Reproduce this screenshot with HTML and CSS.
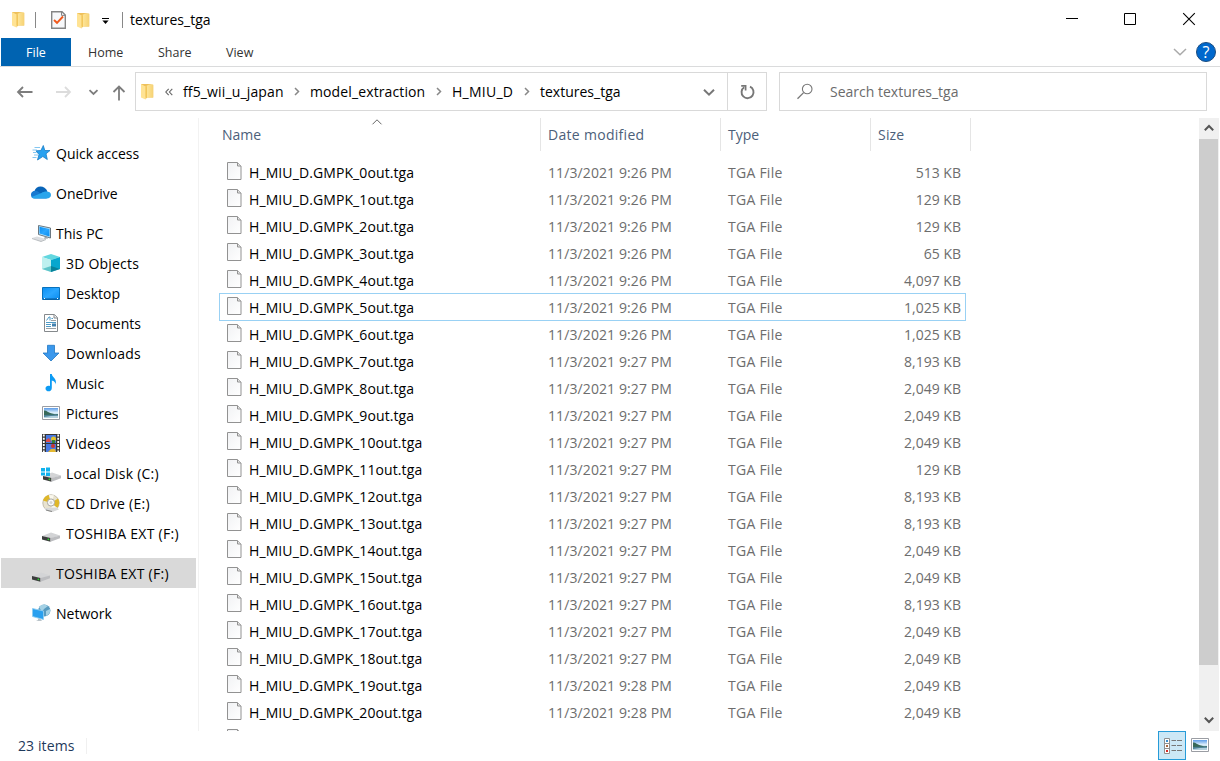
FILE: index.html
```html
<!DOCTYPE html>
<html lang="en">
<head>
<meta charset="utf-8">
<title>textures_tga</title>
<link rel="stylesheet" href="styles.css">
</head>
<body>
<svg class="defs" width="0" height="0">
  <defs>
    <linearGradient id="gold" x1="0" x2="1"><stop offset="0" stop-color="#ffe9a0"/><stop offset="1" stop-color="#f6d274"/></linearGradient>
    <linearGradient id="blue" x1="0" y1="0" x2="1" y2="1"><stop offset="0" stop-color="#0b8ff2"/><stop offset=".5" stop-color="#2ba7ff"/><stop offset="1" stop-color="#0a8cee"/></linearGradient>
    <linearGradient id="sky" x1="0" y1="0" x2="0" y2="1"><stop offset="0" stop-color="#5b9be8"/><stop offset=".45" stop-color="#d9ecfa"/><stop offset="1" stop-color="#9bc8df"/></linearGradient>
    <linearGradient id="paper" x1="0" y1="0" x2="1" y2="1"><stop offset="0" stop-color="#f1f2f4"/><stop offset="1" stop-color="#ffffff"/></linearGradient>
  </defs>
  <symbol id="folder" viewBox="0 0 13 17"><path d="M0 1H8.500L12.200 2V14.500H5L0 13.500Z" fill="#eec05a"/><path d="M4.500 3.500 8 1.500H12.200V14.500H4.500Z" fill="url(#gold)"/><path d="M0 1 4.500 3.500V16.600L0 14.500Z" fill="#ffe394"/><path d="M4.500 3.500V16.600L6 14.500V3Z" fill="#f2c65b"/></symbol>
  <symbol id="file" viewBox="0 0 15 18"><path d="M.5 .5H10.500L14 4V17.500H.5Z" fill="url(#paper)" stroke="#929292"/><path d="M10.500 .8V4H14" fill="#e5e5e5" stroke="#929292"/></symbol>
  <symbol id="drive" viewBox="0 0 18 10"><path d="M0 4 9 .5 18 3.600 8.500 6.500Z" fill="#d3d4d6"/><path d="M0 4 8.500 6V9.700L0 7.400Z" fill="#3c3d3d"/><path d="M8.500 6 18 3.400V6.300L8.500 9.700Z" fill="#bcbdc0"/><circle cx="6.400" cy="7.300" r=".9" fill="#26d52d"/></symbol>
  <symbol id="picture" viewBox="0 0 18 14"><path d="M.5 .5H17.500V13.500H.5Z" fill="#fff" stroke="#9a9da3"/><path d="M2 2H16V12H2Z" fill="url(#sky)"/><path d="M2 4.500C4.500 4 6 6.500 9 7.300L13 8.300 16 8V9L2 9.500Z" fill="#376959"/><path d="M2 9 16 8.600V12H2Z" fill="#4b8196"/><path d="M2 11 9 10 16 9.800V12H2Z" fill="#b3d0dd"/></symbol>
</svg>

<header class="titlebar">
  <svg class="t-folder" width="13" height="17"><use href="#folder"/></svg>
  <i class="rule first"></i>
  <svg class="t-check" width="15" height="18" viewBox="0 0 15 18"><path d="M.7 .7H11L14.300 4V17.300H.7Z" fill="#f7f8fa" stroke="#858585" stroke-width="1.400"/><path d="M10.500 1V4.400H14" fill="none" stroke="#858585"/><path d="M3 9 6 11.800 12 5.500" fill="none" stroke="#f0591c" stroke-width="1.900"/></svg>
  <svg class="t-folder2" width="13" height="17"><use href="#folder"/></svg>
  <svg class="t-menu" width="7" height="6" viewBox="0 0 7 6"><path d="M0 .5H7" stroke="#000"/><path d="M.4 2.600H6.600L3.500 5.900Z"/></svg>
  <i class="rule second"></i>
  <span class="title">textures_tga</span>
  <div class="controls">
    <svg width="12" height="12" viewBox="0 0 12 12"><path d="M1 5.500H13" stroke="#000"/></svg>
    <svg width="12" height="12" viewBox="0 0 12 12"><path d="M.5 .5H11.500V11.500H.5Z" fill="none" stroke="#000"/></svg>
    <svg width="12" height="12" viewBox="0 0 12 12"><path d="M.2 .2 11.800 11.800M11.800 .2 .2 11.800" stroke="#000" stroke-width="1.100"/></svg>
  </div>
</header>

<nav class="tabs">
  <span class="file-tab">File</span>
  <span class="tab home">Home</span>
  <span class="tab share">Share</span>
  <span class="tab view">View</span>
  <div class="tab-tools">
    <svg width="14" height="8" viewBox="0 0 14 8"><path d="M1 1 7 6.800 13 1" fill="none" stroke="#aaa" stroke-width="1.500"/></svg>
    <span class="help">?</span>
  </div>
</nav>

<section class="navrow">
  <div class="arrows">
    <svg width="120" height="20" viewBox="0 0 120 20" fill="none" stroke="#7d7d7d" stroke-width="1.800">
      <path d="M8 5 3 10 8 15M3 10H17.500"/>
      <path d="M50 5 55 10 50 15M55 10H41" stroke="#dcdcdc"/>
      <path d="M74.500 8.200 78.500 12 82.500 8.200"/>
      <path d="M98.500 10 104 4.500 109.500 10M104 4.500V18.500"/>
    </svg>
  </div>
  <div class="address">
    <svg class="a-folder" width="13" height="17"><use href="#folder"/></svg>
    <svg class="a-more" width="8" height="8" viewBox="0 0 8 8"><path d="M3.700 .8 .8 4 3.700 7.200M7.300 .8 4.400 4 7.300 7.200" fill="none" stroke="#666" stroke-width="1.100"/></svg>
    <span class="crumb c1">ff5_wii_u_japan</span>
    <svg class="sep" width="6" height="10" viewBox="0 0 6 10"><path d="M1 1 4.500 4.500 1 8"/></svg>
    <span class="crumb c2">model_extraction</span>
    <svg class="sep" width="6" height="10" viewBox="0 0 6 10"><path d="M1 1 4.500 4.500 1 8"/></svg>
    <span class="crumb c3">H_MIU_D</span>
    <svg class="sep" width="6" height="10" viewBox="0 0 6 10"><path d="M1 1 4.500 4.500 1 8"/></svg>
    <span class="crumb c4">textures_tga</span>
    <svg class="a-drop" width="12" height="8" viewBox="0 0 12 8"><path d="M1 1.800 6 6.700 11 1.800" fill="none" stroke="#777" stroke-width="2"/></svg>
    <div class="refresh"><svg width="16" height="16" viewBox="0 0 16 16"><path d="M11 2.700A6 6 0 1 1 5.200 3.200" fill="none" stroke="#777" stroke-width="1.900"/><path d="M2.200 1.900H6.600V6.500" fill="none" stroke="#777" stroke-width="1.700"/></svg></div>
  </div>
  <div class="search">
    <svg width="17" height="17" viewBox="0 0 17 17"><circle cx="11.200" cy="6" r="4.800" fill="none" stroke="#777" stroke-width="1.100"/><path d="M7.600 9.600 1.500 15.800" stroke="#777" stroke-width="1.300"/></svg>
    <span>Search textures_tga</span>
  </div>
</section>

<main class="main">
  <aside class="sidebar">
    <div class="item"><svg width="20" height="18" viewBox="0 0 20 18"><path d="M12.300 1.500 13.800 6.500H19L15 9.800 16.300 15.500 11.800 12.500 6.500 16 8 10.500 5 6.800 9.900 6.500Z" fill="#27a1f0" stroke="#197cc5" stroke-width=".8"/><path d="M3.500 3.500H9M1.500 6H6M2 8.500H5.500M3 11H7M1.500 13.500H5.500" stroke="#65b7ec" stroke-width=".8"/></svg><span>Quick access</span></div>
    <div class="item gap"><svg width="20" height="18" viewBox="0 0 20 18"><path d="M3.500 7.500C4.500 1.500 13.500 .5 16.500 7.500L11 11Z" fill="#0864b8"/><path d="M0 11C-.2 7.800 3.500 5.500 7 7.500L16 14.500H4C1.500 14.500 0 13 0 11Z" fill="#1779d0"/><path d="M10.500 9C13 7 20 6.500 20 11 20 13.300 18 14.500 16 14.500H3C1.500 14.500 .8 13.500 .5 13Z" fill="#29a5ec"/></svg><span>OneDrive</span></div>
    <div class="item gap"><svg width="20" height="18" viewBox="0 0 20 18"><path d="M7.500 1.500 19.500 4V14L7.500 10.500Z" fill="#bce8ff" stroke="#5d6b75" stroke-width=".9"/><path d="M8.500 2.800 18.500 5V12.500L8.500 9.500Z" fill="url(#blue)"/><path d="M1 14 6 12.500 15 15 10 17.500Z" fill="#dcdee1"/><path d="M1 14.500 10 17.500 15 15.500" fill="none" stroke="#aaafb3" stroke-width=".8"/><path d="M14 12.500 13 14.800 17 14.600V13.200" fill="#9ca5ab"/></svg><span>This PC</span></div>
    <div class="item sub"><svg width="18" height="18" viewBox="0 0 18 18"><path d="M9 0 18 3 9 6 0 3Z" fill="#63d7df"/><path d="M0 3 9 6V18L0 15Z" fill="#bdf0ef"/><path d="M9 6 18 3V15L9 18Z" fill="#08a7ce"/><path d="M9 12 18 15 9 18Z" fill="#087588" opacity=".75"/><path d="M9 12 0 15 9 18Z" fill="#3fb7be" opacity=".75"/></svg><span class="w1">3D Objects</span></div>
    <div class="item sub"><svg width="18" height="18" viewBox="0 0 18 18"><path d="M.5 3.500H17.500V15.500H.5Z" fill="url(#blue)" stroke="#0872bd"/><path d="M1 15H17" stroke="#075697"/><path d="M2 14.500H3M15 14.500H16" stroke="#fff"/></svg><span>Desktop</span></div>
    <div class="item sub"><svg width="18" height="18" viewBox="0 0 18 18"><path d="M2.500 .5H12.500L15.500 3.500V17.500H2.500Z" fill="#fff" stroke="#85898c"/><path d="M12 .5V4H15.500" fill="#eee" stroke="#85898c"/><path d="M4.500 6.500 7 3H8V6.500M9.500 4.500H11M4 8.500H14M4 10.500H9M4 12.500H9" fill="none" stroke="#4d9ac6"/><path d="M4 14.500H14M9 6.500H14" stroke="#9ba0a4"/><path d="M10 9.500H14V12.500H10Z" fill="#4381ae"/></svg><span>Documents</span></div>
    <div class="item sub"><svg width="18" height="18" viewBox="0 0 18 18"><path d="M5.500 1.300H12.500V9H17L9 17 1 9H5.500Z" fill="#3b98ec" stroke="#2277c3" stroke-width=".8"/></svg><span class="w1">Downloads</span></div>
    <div class="item sub"><svg width="18" height="18" viewBox="0 0 18 18"><path d="M8 0H9.800C10 3.500 15.500 4.500 13.500 10.500 13.500 7 10 6.500 9.800 6.500V14C9.800 18.500 3.500 18.200 3.500 14.500 3.500 12 6 11.200 8 12Z" fill="#0c9bf4"/></svg><span>Music</span></div>
    <div class="item sub"><svg width="18" height="18"><use href="#picture" y="2" width="18" height="14"/></svg><span>Pictures</span></div>
    <div class="item sub"><svg width="18" height="18" viewBox="0 -1 18 18"><path d="M0-1H18V17H0Z" fill="#363636"/><path d="M1.800-.5V17M16.200-.5V17" stroke="#fff" stroke-width="1.800" stroke-dasharray="2 1.200"/><path d="M4 0H14V8H4ZM4 9H14V17H4Z" fill="#4879e2"/><circle cx="11.500" cy="4" r="2.500" fill="#e3c229"/><path d="M4 5 7 3 9 7H4Z" fill="#e04a48"/><path d="M10 5H13V8H10Z" fill="#388038"/><circle cx="11" cy="11" r="2" fill="#ca3731"/><path d="M6 17 9 14H13L14 17" fill="#e4b831"/></svg><span class="w1">Videos</span></div>
    <div class="item sub"><svg width="20" height="18" viewBox="0 0 20 18"><use href="#drive" x="2" y="8" width="18" height="10"/><path d="M0 4H4V7.500H0ZM5 3.500H9V7.500H5ZM0 8.500H4V11.500H0ZM5 8.500H9V12H5Z" fill="#10b2ed"/></svg><span class="w2">Local Disk (C:)</span></div>
    <div class="item sub"><svg width="18" height="18" viewBox="0 0 18 18"><circle cx="9" cy="9" r="8.200" fill="#e8e3d0" stroke="#b6b09d" stroke-width=".8"/><path d="M9 9 1 6.500A8 8 0 0 1 7 1ZM9 9 16 4.500A8 8 0 0 1 15 14Z" fill="#dfb728"/><path d="M9 9 7 1 12 1.200ZM9 9 16 14.500 10 17Z" fill="#faf8ee"/><circle cx="9" cy="8.500" r="3.600" fill="#fafafa" stroke="#aaa9a2"/><circle cx="9" cy="8.500" r="1.500" fill="#d7d7d2"/><path d="M3 14 15 13.500 17 15.500 10 18 3 16Z" fill="#d8d9d9"/><path d="M4 16 10 17.500" stroke="#858686"/></svg><span class="w3">CD Drive (E:)</span></div>
    <div class="item sub"><svg width="18" height="18"><use href="#drive" y="8" width="18" height="10"/></svg><span class="w3">TOSHIBA EXT (F:)</span></div>
    <div class="item gap selected"><svg width="20" height="18"><use href="#drive" x="1" y="8" width="18" height="10"/></svg><span class="w3">TOSHIBA EXT (F:)</span></div>
    <div class="item gap"><svg width="20" height="18" viewBox="0 0 20 18"><circle cx="13.300" cy="6.500" r="6.100" fill="#579abf"/><path d="M8 3C11-.5 14 0 17 2L13 5 11 8ZM15 7 19 5C20 9 17 11 15 12Z" fill="#a4d1e5"/><path d="M1.500 4.500 12.500 7V15.500L1.500 12.500Z" fill="#2aa0ef" stroke="#8fcdf0" stroke-width=".9"/><path d="M7 14.500V16L5 17H11L9.500 15Z" fill="#b9c3c9"/></svg><span>Network</span></div>
  </aside>

  <section class="listing">
    <div class="columns">
      <span class="col name">Name<svg class="sort" width="10" height="6" viewBox="0 0 10 6"><path d="M.5 5.300 5 .8 9.500 5.300" fill="none" stroke="#666"/></svg></span>
      <span class="col date">Date modified</span>
      <span class="col type">Type</span>
      <span class="col size">Size</span>
    </div>
    <div class="rows" id="rows"></div>
  </section>

  <div class="scrollbar">
    <svg class="up" width="10" height="8" viewBox="0 0 10 8"><path d="M.8 6.200 5 2 9.200 6.200" fill="none" stroke="#555" stroke-width="2"/></svg>
    <i class="thumb"></i>
    <svg class="down" width="10" height="8" viewBox="0 0 10 8"><path d="M.8 1.800 5 6 9.200 1.800" fill="none" stroke="#555" stroke-width="2"/></svg>
  </div>
</main>

<footer class="status">
  <span class="count">23 items</span>
  <div class="views">
    <span class="details"><svg width="18" height="16" viewBox="0 0 18 16"><path d="M.5 .5H5.500V15.500H.5ZM.5 5.500H5.500M.5 10.500H5.500" fill="#fff" stroke="#909090"/><path d="M2 2H4V4H2Z" fill="#3a8dcc"/><path d="M2 7H4V9H2Z" fill="#a96a41"/><path d="M2 12H4V14H2Z" fill="#d62926"/><path d="M7.500 2.500H12M13 2.500H18M7.500 7.500H12M13 7.500H18M7.500 12.500H12M13 12.500H18" stroke="#777"/></svg></span>
    <svg class="large" width="18" height="14"><use href="#picture"/></svg>
  </div>
</footer>
<script src="rows.js"></script>
</body>
</html>
```
FILE: styles.css
```css
* { box-sizing: border-box; }
body { margin: 0; width: 1220px; height: 761px; overflow: hidden; background: #fff; color: #000; font: 14px/20px "Open Sans", "Noto Sans", sans-serif; display: flex; flex-direction: column; white-space: nowrap; }
svg { display: block; flex: none; overflow: visible; }
.defs { position: absolute; }

.titlebar { height: 38px; display: flex; align-items: center; padding: 0 25px 0 12px; flex: none; }
.t-folder { margin-top: 1px; }
.rule { width: 1px; height: 16px; background: #888; margin-top: 2px; }
.first { margin-left: 10px; }
.t-check { margin: 2px 0 0 15px; }
.t-folder2 { margin: 3px 0 0 11px; }
.t-menu { margin: 3px 0 0 12px; }
.second { margin-left: 13px; }
.title { margin: 2px 0 0 7px; }
.controls { margin-left: auto; display: flex; gap: 47px; }

.tabs { height: 29px; flex: none; display: flex; align-items: center; border-bottom: 1px solid #dadbdc; padding: 0 4px 0 1px; font-size: 12.5px; color: #333; }
.file-tab { align-self: stretch; display: flex; align-items: center; justify-content: center; width: 70px; background: #0063b1; color: #fff; padding-top: 1px; }
.tab { padding-top: 2px; }
.home { margin-left: 17px; width: 70px; }
.share { width: 68px; }
.tab-tools { margin-left: auto; display: flex; align-items: center; gap: 9px; }
.help { width: 20px; height: 20px; border-radius: 50%; background: #0068cd; border: 1px solid #1c4d80; color: #fff; font-size: 16px; line-height: 18px; text-align: center; }

.navrow { height: 51px; flex: none; display: flex; align-items: flex-start; padding: 5px 13px 0 15px; }
.arrows { width: 120px; padding-top: 10px; }
.address { width: 632px; height: 39px; border: 1px solid #d9d9d9; display: flex; align-items: center; padding-left: 5px; }
.a-more { margin-left: 11px; }
.crumb { flex: none; }
.c1 { margin-left: 10px; width: 111px; letter-spacing: .14px; }
.c2 { margin-left: 10px; width: 126px; letter-spacing: .12px; }
.c3 { margin-left: 10px; width: 72px; letter-spacing: .25px; }
.c4 { margin-left: 10px; }
.sep { fill: none; stroke: #888; stroke-width: 1.5; }
.a-drop { margin-left: auto; margin-right: 12px; }
.refresh { width: 39px; align-self: stretch; border-left: 1px solid #d9d9d9; display: flex; align-items: center; justify-content: center; }
.search { width: 428px; height: 39px; margin-left: 12px; border: 1px solid #d9d9d9; display: flex; align-items: center; padding-left: 16px; gap: 17px; color: #6b6b6b; }

.main { height: 613px; flex: none; display: flex; }
.sidebar { width: 199px; flex: none; border-right: 1px solid #f2f2f2; padding: 20px 2px 0 1px; }
.item { height: 30px; display: flex; align-items: center; padding-left: 30px; gap: 5px; }
.item span { margin-top: 1px; }
.item.gap { margin-top: 10px; }
.item.sub { padding-left: 41px; gap: 6px; }
.item.sub svg[width="20"] { margin-left: -1px; margin-right: -1px; }
.w1 { letter-spacing: .2px; }
.w2 { letter-spacing: .22px; }
.w3 { letter-spacing: .28px; }
.selected { background: #d9d9d9; }

.listing { width: 1000px; overflow: hidden; }
.columns { height: 33px; display: flex; color: #4c607a; }
.col { position: relative; border-right: 1px solid #e5e5e5; padding: 7px 0 0 7px; }
.name { width: 342px; padding-left: 23px; }
.date { width: 180px; letter-spacing: .3px; }
.type { width: 150px; }
.size { width: 100px; letter-spacing: .2px; }
.sort { position: absolute; left: 173px; top: 1px; }
.rows { padding: 8px 0 0 20px; height: 580px; overflow: hidden; }
.row { width: 747px; height: 27px; display: grid; grid-template-columns: 15px 306px 180px 125px 108px; align-items: center; padding-left: 8px; color: #6d6d6d; letter-spacing: .1px; }
.row svg { margin-top: -3px; }
.row .fname { color: #000; padding-left: 7px; }
.row .kind { letter-spacing: .25px; }
.row .bytes { text-align: right; letter-spacing: 0; }
.row.focused { outline: 1px solid #99d1f4; outline-offset: -1px; height: 28px; margin: -1px 0 0; padding-top: 1px; }

.scrollbar { width: 20px; background: #f0f0f0; display: flex; flex-direction: column; align-items: center; margin-left: auto; margin-right: 1px; }
.up { margin-top: 6px; }
.thumb { width: 19px; height: 526px; margin: 7px 1px 0 0; background: #cdcdcd; }
.down { margin-top: 51px; }

.status { height: 30px; display: flex; align-items: center; padding: 0 11px 0 18px; color: #1e395b; }
.count { width: 69px; border-right: 1px solid #f0f0f0; line-height: 16px; letter-spacing: .1px; }
.views { margin-left: auto; display: flex; align-items: center; gap: 5px; }
.details { width: 28px; height: 29px; margin-top: -1px; padding-left: 1px; display: flex; align-items: center; justify-content: center; background: #cce8f6; border: 1px solid #269bd8; }
.large { margin-top: -2px; }
```
FILE: rows.js
```js
const sizes = ["513", "129", "129", "65", "4,097", "1,025", "1,025", "8,193", "2,049", "2,049", "2,049", "129", "8,193", "8,193", "2,049", "2,049", "8,193", "2,049", "2,049", "2,049", "2,049"];
const minute = i => (i < 7 ? 26 : i < 19 ? 27 : 28);
const icon = '<svg width="15" height="18"><use href="#file"/></svg>';
document.getElementById("rows").innerHTML = sizes.map((size, i) => `
  <div class="row${i === 5 ? " focused" : ""}">
    ${icon}
    <span class="fname">H_MIU_D.GMPK_${i}out.tga</span>
    <span>11/3/2021 9:${minute(i)} PM</span>
    <span class="kind">TGA File</span>
    <span class="bytes">${size} KB</span>
  </div>`).join("") + `<div class="row">${icon}</div>`;
```
